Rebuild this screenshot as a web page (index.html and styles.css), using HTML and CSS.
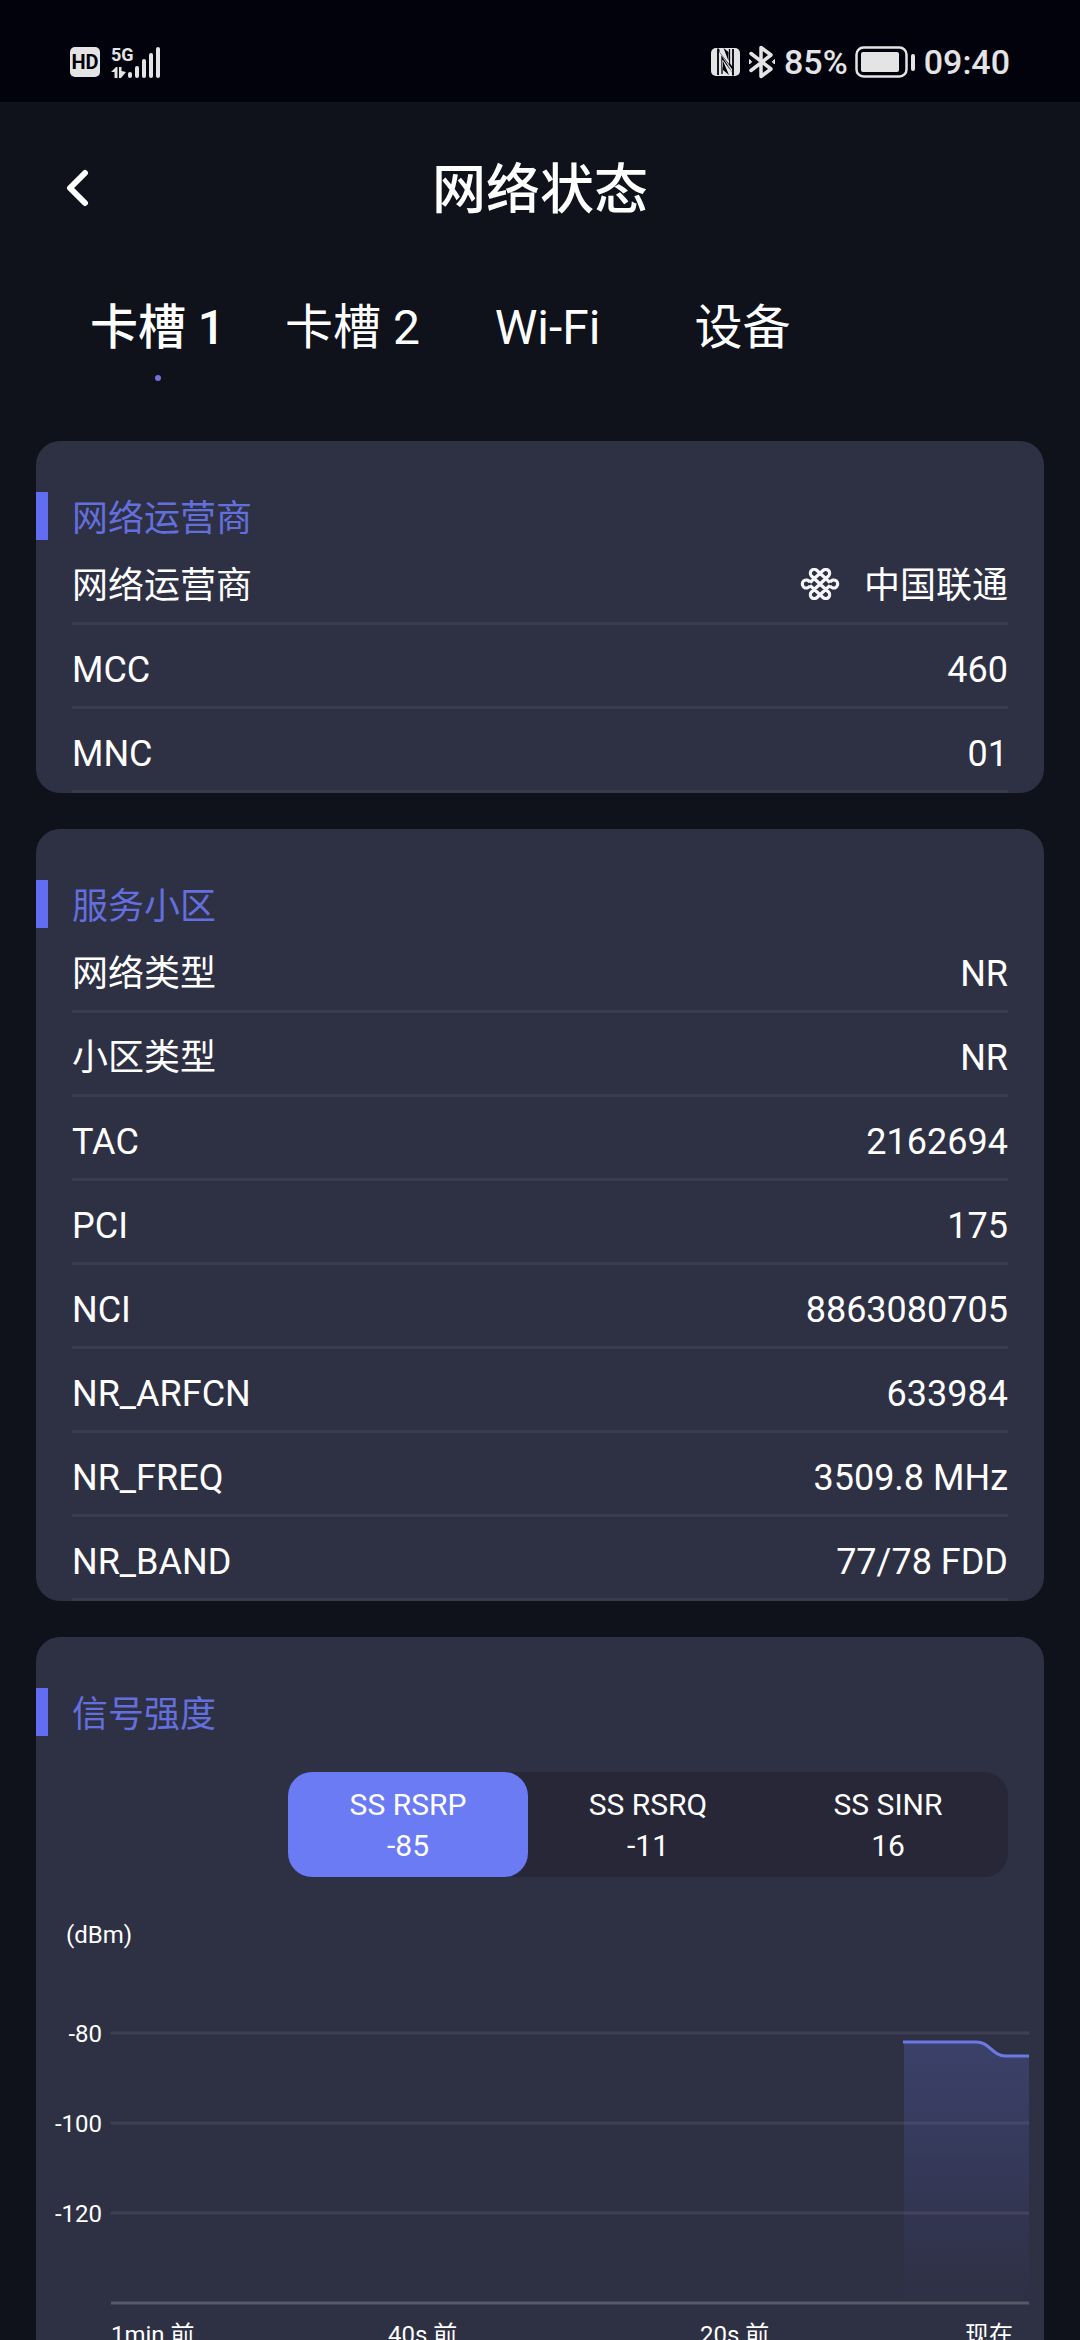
FILE: index.html
```html
<!DOCTYPE html>
<html lang="zh-CN">
<head>
    <meta charset="UTF-8">
    <meta name="viewport" content="width=device-width, initial-scale=1.0">
    <title>网络状态</title>
    <link rel="stylesheet" href="styles.css">
</head>
<body>
    <div class="screen">
        <div class="status-bar">
            <div class="status-group">
                <span class="hd">HD</span>
                <svg class="signal" width="50" height="34" viewBox="0 0 50 34" fill="#e4e4e4">
                    <text x="0" y="16" class="signal-text">5G</text>
                    <path d="M0 27l5-5h1.500v11H3.500v-6zM8 22h2.500v4l4.500 1-5 6H8z"/>
                    <rect x="17" y="27" width="4" height="6" rx="2"/>
                    <rect x="24" y="21" width="4" height="12" rx="2"/>
                    <rect x="31" y="14" width="4" height="19" rx="2"/>
                    <rect x="38" y="8" width="4" height="25" rx="2"/>
                    <rect x="45" y="2" width="4" height="31" rx="2"/>
                </svg>
            </div>
            <div class="status-group">
                <!-- NFC -->
                <svg width="29" height="34" viewBox="0 0 29 34">
                    <rect x="0" y="3" width="29" height="28" rx="5" fill="#e4e4e4"/>
                    <g fill="none" stroke="#01020c" stroke-width="1.800">
                        <path d="M7 3.500V30M22 4v26.500"/>
                        <path d="M7.500 4.500L22 24"/>
                        <path d="M11 29V12.500L22 29.500M18.500 4v13L9 4" stroke-width="1.300"/>
                    </g>
                    <path d="M8.500 3h4l5.500 8v8L8.500 7zM11.500 15l9.500 12v4h-3l-6.500-9z" fill="#e4e4e4"/>
                    <path d="M12 16v9l6 5zM17.500 16V7l-5-4z" fill="#01020c"/>
                </svg>
                <!-- Bluetooth -->
                <svg class="bluetooth" width="28" height="34" viewBox="0 0 28 34" fill="none" stroke="#e4e4e4" stroke-width="3.500" stroke-linecap="round" stroke-linejoin="round">
                    <path d="M3 8.500l20 15.500-10 7.500v-29l10 7.500L3 25.500"/>
                    <path d="M1.500 15v4l2-2zM26.500 15v4l-2-2z" fill="#e4e4e4" stroke-width="1"/>
                </svg>
                <span>85%</span>
                <!-- 电池 -->
                <svg class="battery" width="61" height="34" viewBox="0 0 61 34">
                    <rect x="1.500" y="2.500" width="50" height="29" rx="7" fill="none" stroke="#e4e4e4" stroke-width="2.500"/>
                    <rect x="6" y="7" width="38" height="20" rx="2" fill="#e4e4e4"/>
                    <rect x="56" y="9" width="4" height="17" rx="2" fill="#e4e4e4"/>
                </svg>
                <span>09:40</span>
            </div>
        </div>

        <header class="header">
            <button class="back" type="button" aria-label="返回">
                <svg width="24" height="38" viewBox="0 0 24 38" fill="none" stroke="#fff" stroke-width="6" stroke-linecap="round" stroke-linejoin="round">
                    <path d="M20 4L5 19l15 15"/>
                </svg>
            </button>
            <h1>网络状态</h1>
        </header>

        <nav class="tabs">
            <button class="tab active" type="button">卡槽 1</button>
            <button class="tab" type="button">卡槽 2</button>
            <button class="tab" type="button">Wi-Fi</button>
            <button class="tab" type="button">设备</button>
        </nav>

        <main class="content">
            <section class="card">
                <h2>网络运营商</h2>
                <dl>
                    <div class="row">
                        <dt>网络运营商</dt>
                        <dd>
                            <svg class="carrier" width="40" height="32" viewBox="0 0 40 32" fill="none" stroke="#f4f4fa" stroke-width="3.200" stroke-linejoin="round">
                                <path d="M20 16L11.500 8a3.800 3.800 0 0 1 5.500-5.500L30 14.500M20 16l8.500 8a3.800 3.800 0 0 1-5.500 5.500L10 17.500M20 16l8.500-8A3.800 3.800 0 0 0 23 2.500L10 14.500M20 16l-8.500 8a3.800 3.800 0 0 0 5.500 5.500L30 17.500"/>
                                <path d="M10 14.500a4 4 0 1 0 0 3M30 14.500a4 4 0 1 1 0 3"/>
                            </svg>
                            中国联通
                        </dd>
                    </div>
                    <div class="row"><dt>MCC</dt><dd>460</dd></div>
                    <div class="row"><dt>MNC</dt><dd>01</dd></div>
                </dl>
            </section>

            <section class="card">
                <h2>服务小区</h2>
                <dl>
                    <div class="row"><dt>网络类型</dt><dd>NR</dd></div>
                    <div class="row"><dt>小区类型</dt><dd>NR</dd></div>
                    <div class="row"><dt>TAC</dt><dd>2162694</dd></div>
                    <div class="row"><dt>PCI</dt><dd>175</dd></div>
                    <div class="row"><dt>NCI</dt><dd>8863080705</dd></div>
                    <div class="row"><dt>NR_ARFCN</dt><dd>633984</dd></div>
                    <div class="row"><dt>NR_FREQ</dt><dd>3509.8 MHz</dd></div>
                    <div class="row"><dt>NR_BAND</dt><dd>77/78 FDD</dd></div>
                </dl>
            </section>

            <section class="card">
                <h2>信号强度</h2>
                <div class="segments">
                    <button class="segment active" type="button">SS RSRP<br>-85</button>
                    <button class="segment" type="button">SS RSRQ<br>-11</button>
                    <button class="segment" type="button">SS SINR<br>16</button>
                </div>
                <div class="unit">(dBm)</div>
                <div class="chart">
                    <div class="y-axis">
                        <span>-80</span>
                        <span>-100</span>
                        <span>-120</span>
                    </div>
                    <svg class="plot" viewBox="0 0 918 274" preserveAspectRatio="none" fill="none">
                        <defs>
                            <linearGradient id="fade" x1="0" y1="0" x2="0" y2="1">
                                <stop offset="0" stop-color="#6b7bf3" stop-opacity="0.22"/>
                                <stop offset="1" stop-color="#6b7bf3" stop-opacity="0"/>
                            </linearGradient>
                        </defs>
                        <path d="M0 2h918M0 92h918M0 182h918" stroke="#3e3f53" stroke-width="3"/>
                        <path d="M793 11H865C879 11 881 25 895 25H918V272H793z" fill="url(#fade)"/>
                        <path d="M792 11H865C879 11 881 25 895 25H918" stroke="#6b7ae2" stroke-width="3"/>
                        <path d="M0 272h918" stroke="#575869" stroke-width="3"/>
                    </svg>
                    <div class="x-axis">
                        <span>1min 前</span>
                        <span>40s 前</span>
                        <span>20s 前</span>
                        <span>现在</span>
                    </div>
                </div>
            </section>
        </main>
    </div>
</body>
</html>
```
FILE: styles.css
```css
* {
    box-sizing: border-box;
}
body {
    margin: 0;
    background-color: #0f111b;
    color: #ffffff;
    font-family: Roboto, "Noto Sans CJK SC", sans-serif;
    font-size: 36px;
}
h1, h2, dl, dd {
    margin: 0;
    font-weight: normal;
}
button {
    padding: 0;
    border: none;
    background: none;
    color: inherit;
    font-family: inherit;
    cursor: pointer;
}
svg {
    display: block;
}
.screen {
    height: 100vh;
    overflow: hidden;
}

/* Status bar */
.status-bar {
    display: flex;
    justify-content: space-between;
    height: 102px;
    padding: 22px 70px 0;
    background-color: #01020c;
    color: #e4e4e4;
    font-size: 34px;
    font-weight: 500;
}
.status-group {
    display: flex;
    align-items: center;
}
.hd {
    width: 30px;
    margin-right: 11px;
    border-radius: 5px;
    background-color: #e4e4e4;
    color: #01020c;
    font-size: 20px;
    font-weight: 700;
    line-height: 30px;
    text-align: center;
}
.signal-text {
    font-family: "Liberation Sans Narrow", Roboto, sans-serif;
    font-size: 18px;
    font-weight: 700;
}
.bluetooth {
    margin: 0 8px;
}
.battery {
    margin: 0 8px 0 7px;
}

/* Header */
.header {
    display: grid;
    grid-template-columns: 60px 1fr 60px;
    align-items: center;
    height: 172px;
    padding: 0 47px;
}
.back {
    display: flex;
    justify-content: center;
    padding: 18px 0;
}
h1 {
    padding-bottom: 6px;
    font-size: 54px;
    font-weight: 500;
    text-align: center;
}
.tabs {
    display: flex;
    height: 167px;
    padding: 24px 60px 0;
}
.tab {
    display: flex;
    flex-direction: column;
    align-items: center;
    width: 195px;
    font-size: 48px;
    line-height: 60px;
}
.tab.active {
    font-weight: 500;
}
.tab.active::after {
    content: "";
    width: 6px;
    height: 6px;
    margin-top: 17px;
    border-radius: 50%;
    background-color: #7272dc;
}

/* Cards */
.content {
    display: flex;
    flex-direction: column;
    gap: 36px;
    padding: 0 36px;
}
.card {
    padding-top: 51px;
    border-radius: 24px;
    background-color: #2e3044;
}
h2 {
    height: 48px;
    margin-bottom: 1px;
    padding-left: 24px;
    border-left: 12px solid #616df2;
    color: #636fdc;
    font-size: 36px;
    line-height: 54px;
}
.row {
    display: flex;
    justify-content: space-between;
    margin: 0 36px;
    padding: 24px 0 15px;
    border-bottom: 3px solid #3a3c4e;
    line-height: 42px;
}
dd {
    display: flex;
    align-items: center;
}
.carrier {
    margin: -4px 24px 0 0;
}

/* Signal chart */
.segments {
    display: flex;
    width: 720px;
    max-width: 100%;
    margin: 36px 36px 0 auto;
    border-radius: 24px;
    background-color: #272738;
}
.segment {
    flex: 1;
    padding: 12px 0 11px;
    border-radius: 24px;
    font-size: 30px;
    line-height: 41px;
}
.segment.active {
    background-color: #6b7bf3;
}
.unit {
    margin-top: 42px;
    padding-left: 30px;
    font-size: 24px;
    line-height: 32px;
}
.chart {
    display: grid;
    grid-template-columns: 75px 1fr;
    padding: 80px 15px 36px 0;
    font-size: 24px;
}
.y-axis {
    display: flex;
    flex-direction: column;
    gap: 62px;
    height: 274px;
    margin-top: -11px;
    padding-right: 9px;
    line-height: 28px;
    text-align: right;
}
.plot {
    width: 100%;
    height: 274px;
}
.x-axis {
    display: grid;
    grid-column: 2;
    grid-template-columns: 277fr 312fr 265fr 64fr;
    padding-top: 12px;
    line-height: 36px;
}
```
